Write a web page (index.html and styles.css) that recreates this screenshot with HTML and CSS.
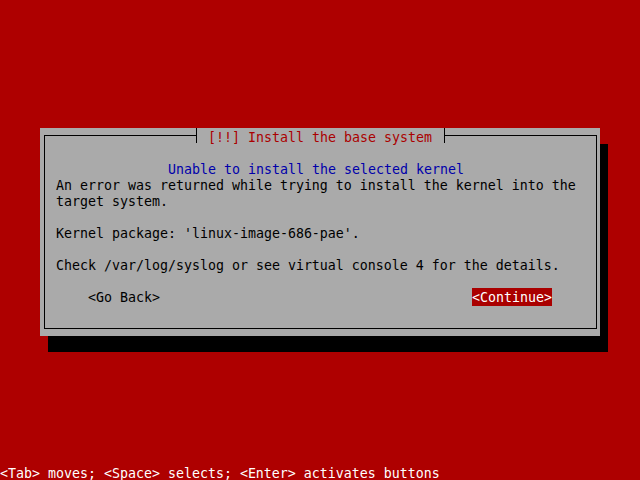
FILE: index.html
```html
<!DOCTYPE html>
<html lang="en">
<head>
    <meta charset="UTF-8">
    <title>Install the base system</title>
    <link rel="stylesheet" href="styles.css">
</head>
<body>
    <div class="screen">
        <!-- Dialog -->
        <div class="dialog">
            <fieldset class="frame">
                <legend class="title"><span class="tee-l"></span> [!!] Install the base system <span class="tee-r"></span></legend>
                <p class="heading">Unable to install the selected kernel</p>
                <p>An error was returned while trying to install the kernel into the<br>target system.</p>
                <p class="gap">Kernel package: 'linux-image-686-pae'.</p>
                <p class="gap">Check /var/log/syslog or see virtual console 4 for the details.</p>
                <div class="buttons gap">
                    <span class="btn">&lt;Go Back&gt;</span>
                    <span class="btn active">&lt;Continue&gt;</span>
                </div>
            </fieldset>
        </div>

        <!-- Help line -->
        <div class="help">&lt;Tab&gt; moves; &lt;Space&gt; selects; &lt;Enter&gt; activates buttons</div>
    </div>
</body>
</html>
```

FILE: styles.css
```css
body {
    margin: 0;
    background: #ae0000;
    font-family: "DejaVu Sans Mono", "Liberation Mono", monospace;
    font-size: 13.29px;
    line-height: 16px;
    color: #000;
    overflow: hidden;
}

.screen {
    width: 640px;
    height: 480px;
    display: flex;
    flex-direction: column;
}

/* Dialog box with its hard shadow */
.dialog {
    margin: 128px 0 0 40px;
    width: 560px;
    height: 208px;
    background: #aaaaaa;
    box-shadow: 8px 16px 0 #000;
    display: flex;
    flex-direction: column;
}

.frame {
    margin: 0 3px 0 4px;
    padding: 19px 20px 22px 11px;
    border: 1px solid #000;
    min-width: 0;
}

.title {
    margin-left: 136px;
    padding: 0;
    height: 15px;
    line-height: 19px;
    color: #aa0000;
    white-space: pre;
}

.tee-l,
.tee-r {
    display: inline-block;
    width: 8px;
    height: 15px;
    vertical-align: top;
}

.tee-l {
    background: linear-gradient(#000, #000) 4px 0 / 1px 15px no-repeat,
                linear-gradient(#000, #000) 0 7px / 4px 1px no-repeat;
}

.tee-r {
    background: linear-gradient(#000, #000) 4px 0 / 1px 15px no-repeat,
                linear-gradient(#000, #000) 4px 7px / 4px 1px no-repeat;
}

p {
    margin: 0;
    white-space: pre;
}

.heading {
    text-align: center;
    color: #0000aa;
}

.gap {
    margin-top: 16px;
}

.buttons {
    display: flex;
    justify-content: space-between;
    padding: 0 24px 0 32px;
}

.btn {
    white-space: pre;
}

.btn.active {
    background: #aa0000;
    color: #fff;
    padding-top: 1px;
    margin-top: -2px;
    line-height: 17px;
}

/* Bottom help line */
.help {
    margin-top: auto;
    height: 16px;
    line-height: 19px;
    color: #fff;
    white-space: pre;
}
```
